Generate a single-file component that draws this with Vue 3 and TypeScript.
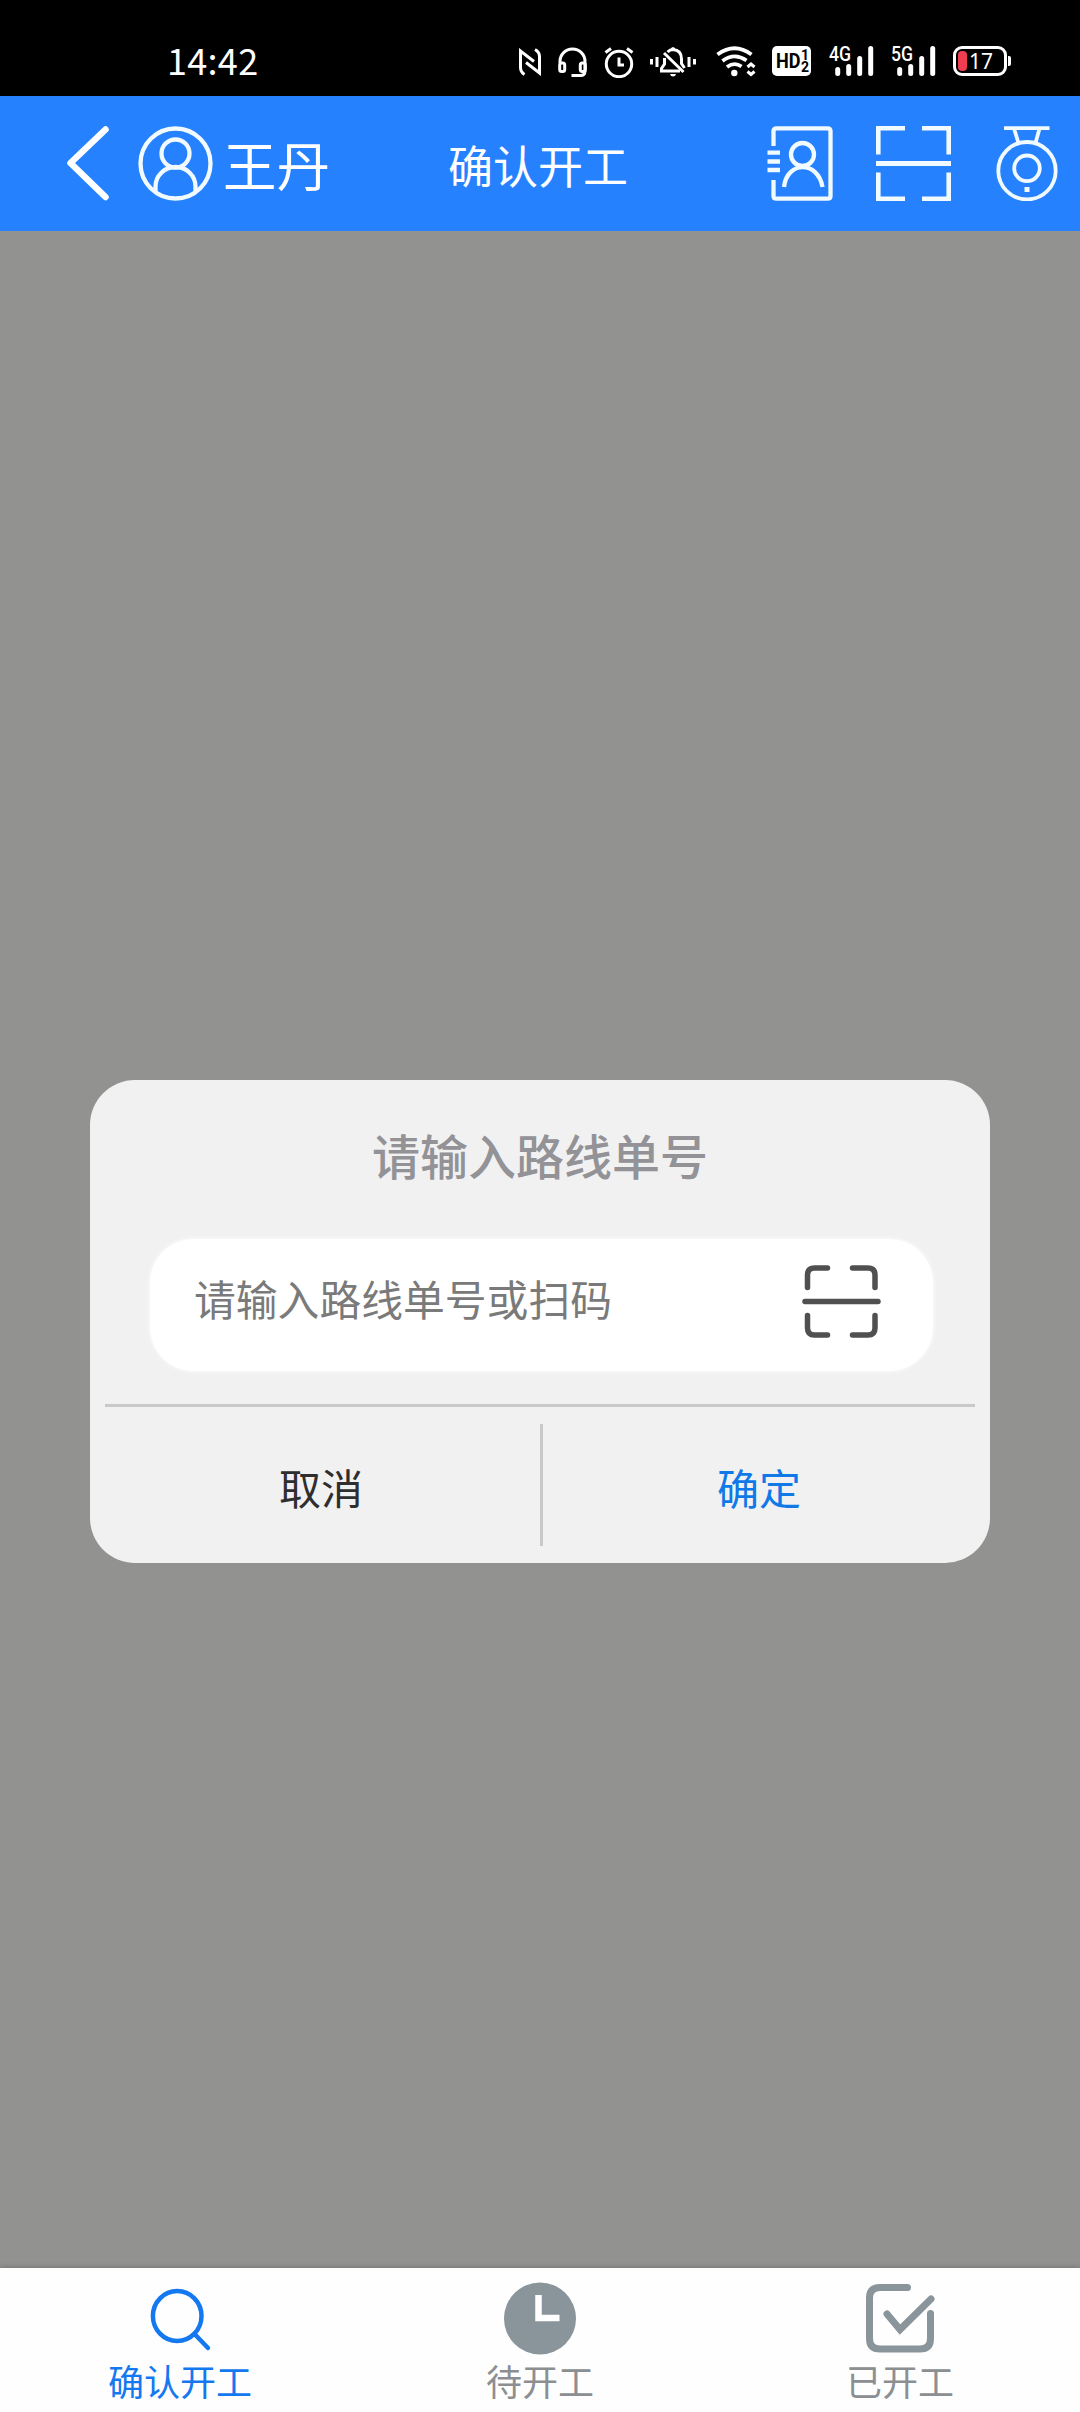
<script setup lang="ts">
import { ref } from 'vue'

type TabKey = 'confirm' | 'pending' | 'started'

const tabs: { key: TabKey; label: string }[] = [
  { key: 'confirm', label: '确认开工' },
  { key: 'pending', label: '待开工' },
  { key: 'started', label: '已开工' },
]
const activeTab = ref<TabKey>('confirm')
const routeNo = ref('')
const networks = ['4G', '5G']
</script>

<template>
  <div class="screen">
    <div class="status-bar">
      <span class="time">14:42</span>
      <div class="status-icons">
        <svg class="nfc" width="22" height="28" viewBox="0 0 22 28">
          <path d="M5.500 26.500 Q1.500 24 1.500 19.500 V3 L15 13.500 M16 1.500 Q20.500 4 20.500 8.500 V25 L7 14.500" />
        </svg>
        <svg class="headset" width="29" height="31" viewBox="0 0 29 31">
          <path d="M2 16 V14.500 A12.500 12.500 0 0 1 27 14.500 V24 Q27 28.500 22.500 28.500 H13.500" />
          <rect x="1.700" y="16" width="5" height="8.500" rx="2" />
          <rect x="22.300" y="16" width="5" height="8.500" rx="2" />
        </svg>
        <svg class="alarm" width="30" height="31" viewBox="0 0 30 31">
          <circle cx="15" cy="17" r="12.700" />
          <path d="M15 10.500 V18 H20 M1.500 5.500 L7 1.500 M28.500 5.500 L23 1.500" />
        </svg>
        <svg class="bell" width="46" height="31" viewBox="0 0 46 31">
          <path d="M1.500 13 V18.500 M7 11 V21 M39 11 V21 M44.500 13 V18.500" />
          <path d="M14.500 12 V18 L11.500 22.500 V25 H30 M17.500 6 Q20 3.500 23 3.500 Q31.500 4 31.500 13 V17.500 L34.500 22 M14 7 L33.500 26" />
          <path class="solid" d="M20.500 3.500 Q21 1 23 1 Q25 1 25.500 3.500 Z M20 28 H26 Q25.500 30.500 23 30.500 Q20.500 30.500 20 28 Z" />
        </svg>
        <svg class="wifi" width="40" height="31" viewBox="0 0 40 31">
          <path d="M1.500 8.500 Q18.500 -4 35.500 8.500 M6.500 15 Q18.500 6 30.500 14.500 M11 21 Q18.500 15.500 25.500 20.500" />
          <circle class="solid" cx="18.300" cy="27" r="3.200" />
          <path class="arrows" d="M31.500 21 L35 18 L38.500 21 M31.500 25.500 L35 28.500 L38.500 25.500" />
        </svg>
        <div class="hd">
          <span>HD</span>
          <div class="hd-sim"><i>1</i><i>2</i></div>
        </div>
        <div v-for="net in networks" :key="net" class="signal">
          <span class="net">{{ net }}</span>
          <svg width="39" height="30" viewBox="0 0 39 30">
            <path d="M2.700 23.500 V27.500 M13.700 20.500 V27.500 M24.700 12.500 V27.500 M35.700 2.500 V27.500" />
          </svg>
        </div>
        <div class="battery">
          <div class="cell"><b class="level"></b><span>17</span></div>
          <b class="cap"></b>
        </div>
      </div>
    </div>

    <header class="nav">
      <div class="nav-side">
        <svg class="back" width="43" height="76" viewBox="0 0 43 76">
          <path d="M38.500 3.500 L3.500 37 L38.500 71" />
        </svg>
        <svg class="avatar" width="75" height="75" viewBox="0 0 75 75">
          <circle cx="37.500" cy="37.500" r="35" />
          <circle cx="37.500" cy="27.500" r="14" />
          <path d="M17.500 66 V60.500 A20 19.500 0 0 1 57.500 60.500 V66" />
        </svg>
        <span class="user">王丹</span>
      </div>
      <h1 class="title">确认开工</h1>
      <div class="nav-side nav-right">
        <svg width="66" height="75" viewBox="0 0 66 75">
          <path d="M6.500 20 V5 Q6.500 2.300 9.500 2.300 H60.500 Q63.500 2.300 63.500 5 V70 Q63.500 72.700 60.500 72.700 H9.500 Q6.500 72.700 6.500 70 V54" />
          <path d="M0.500 26.700 H13 M0.500 35.500 H13 M0.500 44 H13" />
          <circle cx="35.500" cy="28.500" r="11.500" />
          <path d="M17 61 C20 34.500 51 34.500 55.500 61" />
        </svg>
        <svg class="scan" width="75" height="75" viewBox="0 0 75 75">
          <path d="M2.200 28.500 V2.200 H29 M46 2.200 H72.800 V28.500 M2.200 46.500 V72.800 H29 M46 72.800 H72.800 V46.500 M0 37.500 H75" />
        </svg>
        <svg class="camera" width="62" height="75" viewBox="0 0 62 75">
          <path d="M8 2.200 H53.500 M18 2.500 L22.500 17 M43.500 2.500 L39.500 17" />
          <circle cx="31" cy="44.700" r="28.700" />
          <circle cx="31" cy="42.300" r="12.800" />
          <rect x="28.500" y="61" width="5" height="5" />
        </svg>
      </div>
    </header>

    <main class="mask">
      <section class="dialog">
        <h2>请输入路线单号</h2>
        <div class="field">
          <input v-model="routeNo" type="text" placeholder="请输入路线单号或扫码" />
          <svg width="79" height="73" viewBox="0 0 79 73">
            <path d="M5.500 22.500 V10 Q5.500 3 12.500 3 H25.500 M50.500 3 H66 Q73 3 73 10 V22.500 M3 36.500 H76 M5.500 50.500 V63 Q5.500 70 12.500 70 H25.500 M50.500 70 H66 Q73 70 73 63 V50.500" />
          </svg>
        </div>
        <div class="actions">
          <button type="button" class="cancel">取消</button>
          <i class="split"></i>
          <button type="button" class="ok">确定</button>
        </div>
      </section>
    </main>

    <nav class="tabs">
      <div
        v-for="tab in tabs"
        :key="tab.key"
        class="tab"
        :class="{ active: tab.key === activeTab }"
        @click="activeTab = tab.key"
      >
        <svg v-if="tab.key === 'confirm'" width="72" height="73" viewBox="0 0 72 73">
          <g fill="none" stroke="#1478f0" stroke-width="4.500" stroke-linecap="round">
            <ellipse cx="33.200" cy="34" rx="24.300" ry="25" />
            <path d="M50.500 52 L64 66" />
          </g>
        </svg>
        <svg v-else-if="tab.key === 'pending'" width="72" height="73" viewBox="0 0 72 73">
          <circle cx="36" cy="36.500" r="36" fill="#8a959b" />
          <path d="M34.500 13 V36 H55.500" fill="none" stroke="#fff" stroke-width="6.500" />
        </svg>
        <svg v-else width="72" height="73" viewBox="0 0 72 73">
          <g fill="none" stroke="#8a959b" stroke-width="7" stroke-linecap="round">
            <path d="M43.500 5.500 H16 Q5.500 5.500 5.500 16 V56.500 Q5.500 67 16 67 H56 Q66.500 67 66.500 56.500 V31.500" />
            <path d="M23 32 L36 47.500 L67 17" />
          </g>
        </svg>
        <span>{{ tab.label }}</span>
      </div>
    </nav>
  </div>
</template>

<style>
body {
  margin: 0;
}
</style>

<style scoped>
.screen {
  width: 1080px;
  height: 2412px;
  display: flex;
  flex-direction: column;
  overflow: hidden;
  background: #929291;
  font-family: "Noto Sans CJK SC", sans-serif;
}
svg {
  display: block;
  flex: none;
}
.solid {
  fill: #fff;
  stroke: none !important;
}

/* system status bar */
.status-bar {
  height: 96px;
  flex: none;
  box-sizing: border-box;
  padding: 46px 69px 20px 167px;
  display: flex;
  justify-content: space-between;
  align-items: flex-start;
  background: #000;
  color: #fff;
}
.time {
  font-size: 36px;
  line-height: 26px;
  letter-spacing: 0.3px;
}
.status-icons {
  display: flex;
  align-items: flex-start;
}
.status-icons svg {
  fill: none;
  stroke: #fff;
  stroke-width: 3;
}
.nfc { margin: 2px 17px 0 0; }
.headset { margin: 1px 17px 0 0; }
.alarm { margin: 1px 16px 0 0; }
.bell { margin-right: 20px; }
.status-icons .wifi { margin-right: 16px; stroke-width: 3.800; }
.wifi .arrows { stroke-width: 3; }
.hd {
  width: 39px;
  height: 30px;
  border-radius: 5px;
  background: #fff;
  color: #000;
  display: flex;
  justify-content: center;
  align-items: center;
  margin-right: 18px;
  font: bold 21px/30px Roboto, sans-serif;
}
.hd > span {
  width: 25px;
  transform: scaleX(0.86);
  transform-origin: left center;
  margin-left: 2px;
}
.hd-sim {
  display: flex;
  flex-direction: column;
  width: 8px;
}
.hd-sim i {
  font: bold 14px/12px Roboto, sans-serif;
}
.signal {
  position: relative;
  padding-left: 6px;
  margin-right: 17px;
}
.signal svg {
  stroke-width: 5;
  stroke-linecap: round;
}
.net {
  position: absolute;
  left: 0;
  top: 0;
  font: 500 21px/16px Roboto, sans-serif;
  transform: scaleX(0.84);
  transform-origin: left center;
}
.battery {
  display: flex;
  align-items: center;
}
.cell {
  width: 54px;
  height: 30px;
  box-sizing: border-box;
  border: 3px solid #fff;
  border-radius: 9px;
  display: flex;
  align-items: center;
  padding-left: 2px;
}
.level {
  width: 9px;
  height: 20px;
  border-radius: 4px;
  background: #f03d50;
}
.cell span {
  font: 21px/24px "Noto Sans", sans-serif;
  margin-left: 2px;
}
.cap {
  width: 3px;
  height: 10px;
  margin-left: 1px;
  border-radius: 0 2px 2px 0;
  background: #fff;
}

/* app header */
.nav {
  height: 135px;
  flex: none;
  display: flex;
  align-items: center;
  justify-content: space-between;
  background: #2681ff;
  color: #fff;
}
.nav svg {
  fill: none;
  stroke: #f0faff;
  stroke-width: 4.300;
}
.nav-side {
  flex: none;
  width: 440px;
  box-sizing: border-box;
  display: flex;
  align-items: center;
}
.nav .back {
  margin: 0 28px 0 67px;
  stroke: #fff;
  stroke-width: 6.500;
  stroke-linecap: round;
  stroke-linejoin: round;
}
.avatar { margin-right: 10px; }
.user {
  font-size: 53.500px;
  line-height: 80px;
  margin-top: 1px;
}
.title {
  margin: 2px 0 0;
  font-size: 45px;
  line-height: 66px;
  font-weight: 400;
  padding-right: 4px;
}
.nav-right {
  justify-content: flex-end;
  padding-right: 22px;
}
.nav-right .scan {
  margin: 0 45px 0 43px;
  stroke-width: 4.800;
}
.nav .camera { stroke-width: 3.800; }
.nav .camera rect {
  fill: #f0faff;
  stroke: none;
}

/* dialog */
.mask {
  flex: 1;
  display: flex;
  justify-content: center;
  align-items: flex-start;
  padding-top: 849px;
}
.dialog {
  width: 900px;
  height: 483px;
  box-sizing: border-box;
  border-radius: 45px;
  background: #f1f1f1;
  padding: 0 15px;
  display: flex;
  flex-direction: column;
}
.dialog h2 {
  margin: 39px 0 50px;
  font-size: 48px;
  line-height: 70px;
  font-weight: 500;
  text-align: center;
  color: #929297;
}
.field {
  height: 132px;
  margin: 0 42px 33px 45px;
  border-radius: 44px;
  background: #fff;
  box-shadow: 0 0 5px #fff;
  display: flex;
  align-items: center;
  box-sizing: border-box;
  padding: 0 52px 0 44px;
}
.field input {
  flex: 1;
  min-width: 0;
  height: 64px;
  margin-bottom: 14px;
  border: 0;
  padding: 0;
  outline: 0;
  background: none;
  font: 41.800px "Noto Sans CJK SC", sans-serif;
  color: #333;
}
.field input::placeholder {
  color: #7a7a7a;
  opacity: 1;
}
.field svg {
  margin-bottom: 8px;
  fill: none;
  stroke: #505050;
  stroke-width: 5.500;
  stroke-linecap: round;
}
.actions {
  flex: 1;
  display: flex;
  border-top: 3px solid #c9c9c9;
  padding: 17px 0;
}
.actions button {
  flex: 1;
  border: 0;
  padding: 2px 0 0;
  background: none;
  font: 42px "Noto Sans CJK SC", sans-serif;
}
.actions .cancel {
  flex: 0 0 435px;
  padding-right: 3px;
  color: #2e2e2e;
}
.ok {
  color: #1079e8;
}
.split {
  width: 3px;
  background: #c9c9c9;
}

/* bottom tabs */
.tabs {
  height: 144px;
  flex: none;
  display: flex;
  background: #fefefe;
  box-shadow: 0 0 6px rgba(0, 0, 0, 0.25);
}
.tab {
  flex: 1;
  display: flex;
  flex-direction: column;
  align-items: center;
  padding-top: 14px;
  color: #8c8f91;
}
.tab span {
  font-size: 36px;
  line-height: 51px;
}
.tab.active {
  color: #1478f0;
}
</style>
